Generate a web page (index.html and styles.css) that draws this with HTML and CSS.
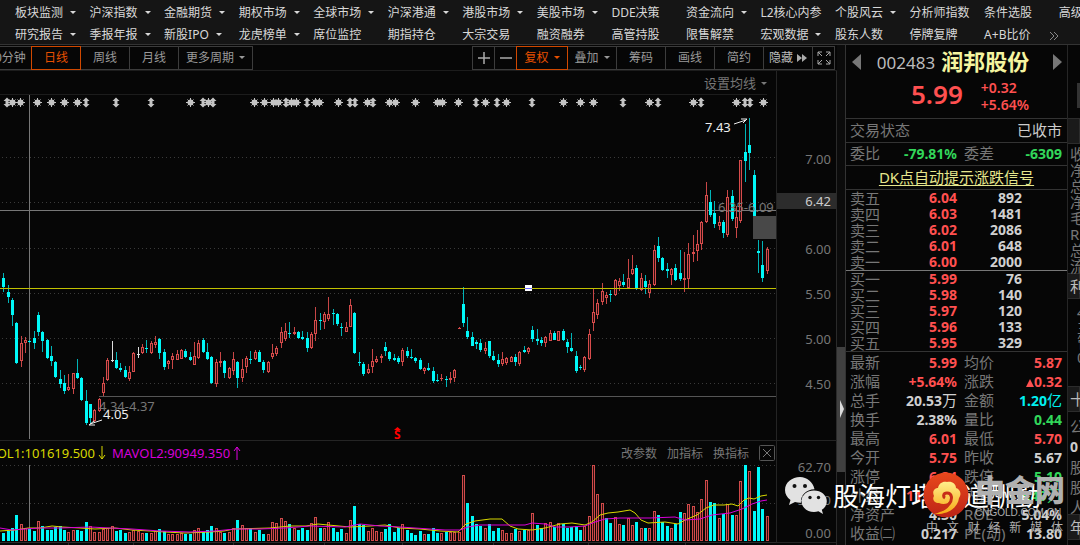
FILE: index.html
```html
<!DOCTYPE html>
<html lang="zh-CN">
<head>
    <meta charset="UTF-8">
    <title>润邦股份 002483</title>
    <link rel="stylesheet" href="styles.css">
</head>
<body>

    <nav class="menu">
        <a href="#" class="drop">板块监测</a>
        <a href="#" class="drop">沪深指数</a>
        <a href="#" class="drop">金融期货</a>
        <a href="#" class="drop">期权市场</a>
        <a href="#" class="drop">全球市场</a>
        <a href="#" class="drop">沪深港通</a>
        <a href="#" class="drop">港股市场</a>
        <a href="#" class="drop">美股市场</a>
        <a href="#">DDE决策</a>
        <a href="#" class="drop">资金流向</a>
        <a href="#">L2核心内参</a>
        <a href="#" class="drop">个股风云</a>
        <a href="#">分析师指数</a>
        <a href="#">条件选股</a>
        <a href="#">高级</a>
        <a href="#" class="drop">研究报告</a>
        <a href="#" class="drop">季报年报</a>
        <a href="#" class="drop">新股IPO</a>
        <a href="#" class="drop">龙虎榜单</a>
        <a href="#">席位监控</a>
        <a href="#">期指持仓</a>
        <a href="#">大宗交易</a>
        <a href="#">融资融券</a>
        <a href="#">高管持股</a>
        <a href="#">限售解禁</a>
        <a href="#" class="drop">宏观数据</a>
        <a href="#">股东人数</a>
        <a href="#">停牌复牌</a>
        <span class="last"><a href="#">A+B比价</a><a href="#" aria-label="更多"><svg width="10" height="10" viewBox="0 0 10 10"><path d="M1 1l4 4-4 4M5 1l4 4-4 4" fill="none" stroke="#888"/></svg></a></span>
    </nav>

    <div class="main">
        <section class="chart">
            <div class="toolbar">
                <div class="group">
                    <button class="minute">30分钟</button>
                    <button class="on">日线</button>
                    <button>周线</button>
                    <button>月线</button>
                    <button class="drop more">更多周期</button>
                </div>
                <div class="group">
                    <button class="icon" aria-label="放大"><svg width="12" height="12" viewBox="0 0 12 12"><path d="M6 0v12M0 6h12" stroke="#aaa" stroke-width="1.5"/></svg></button>
                    <button class="icon" aria-label="缩小"><svg width="12" height="12" viewBox="0 0 12 12"><path d="M0 6h12" stroke="#aaa" stroke-width="1.5"/></svg></button>
                    <button class="drop on">复权</button>
                    <button class="drop">叠加</button>
                    <button>筹码</button>
                    <button>画线</button>
                    <button>简约</button>
                    <button class="hide">隐藏<svg width="10" height="8" viewBox="0 0 10 8"><path d="M0 0l5 4-5 4zM5 0l5 4-5 4z" fill="#aaa"/></svg></button>
                    <button class="icon" aria-label="全屏"><svg width="14" height="14" viewBox="0 0 14 14"><path d="M1 5V1h4M1 1l4 4M9 1h4v4M13 1L9 5M1 9v4h4M1 13l4-4M13 9v4H9M13 13L9 9" fill="none" stroke="#aaa"/></svg></button>
                </div>
            </div>

            <div class="price">
                <div class="plot">
                    <div class="setting"><button class="drop">设置均线</button></div>
                    <svg id="kline" viewBox="0 95 776 345"></svg>
                </div>
                <ul class="axis">
                    <li>7.00</li>
                    <li class="current">6.42</li>
                    <li>6.00</li>
                    <li>5.50</li>
                    <li>5.00</li>
                    <li>4.50</li>
                </ul>
            </div>

            <div class="volume">
                <div class="plot">
                    <div class="vol-head">
                        <span class="ma1"><span>MAVOL1:101619.500</span></span>
                        <svg class="down" width="8" height="14" viewBox="0 0 8 14"><path d="M4 0v13M1 9l3 4 3-4" fill="none" stroke="#d8d800"/></svg>
                        <span class="ma2">MAVOL2:90949.350</span>
                        <svg class="up" width="8" height="14" viewBox="0 0 8 14"><path d="M4 14V1M1 5l3-4 3 4" fill="none" stroke="#e000e0"/></svg>
                        <span class="tools">
                            <button>改参数</button>
                            <button>加指标</button>
                            <button>换指标</button>
                            <button class="close" aria-label="关闭"><svg width="16" height="16" viewBox="0 0 16 16"><rect x=".5" y=".5" width="15" height="15" rx="1" fill="none" stroke="#555"/><path d="M4 4l8 8M12 4l-8 8" stroke="#777"/></svg></button>
                        </span>
                    </div>
                    <svg id="vol" viewBox="0 465 776 80"></svg>
                </div>
                <ul class="axis vol-axis">
                    <li>62.70</li>
                    <li>31.30</li>
                    <li>0.00</li>
                </ul>
            </div>
        </section>

        <div class="splitter"><div class="thumb"></div></div>

        <section class="quote">
            <header>
                <div class="name">
                    <button aria-label="上一只"><svg width="9" height="16" viewBox="0 0 9 16"><path d="M9 0v16L0 8z" fill="#777"/></svg></button>
                    <h1><span class="code">002483</span>润邦股份</h1>
                    <button aria-label="下一只"><svg width="9" height="16" viewBox="0 0 9 16"><path d="M0 0v16l9-8z" fill="#777"/></svg></button>
                </div>
                <div class="now red">
                    <b>5.99</b>
                    <p>+0.32<br>+5.64%</p>
                </div>
            </header>
            <div class="state"><span>交易状态</span><span class="closed">已收市</span></div>
            <table class="detail ratio">
                <tr><th>委比</th><td class="green">-79.81%</td><th>委差</th><td class="green">-6309</td></tr>
            </table>
            <div class="dk"><a href="#">DK点自动提示涨跌信号</a></div>
            <table class="level">
                <tr><th>卖五</th><td class="red">6.04</td><td>892</td></tr>
                <tr><th>卖四</th><td class="red">6.03</td><td>1481</td></tr>
                <tr><th>卖三</th><td class="red">6.02</td><td>2086</td></tr>
                <tr><th>卖二</th><td class="red">6.01</td><td>648</td></tr>
                <tr><th>卖一</th><td class="red">6.00</td><td>2000</td></tr>
            </table>
            <table class="level buy">
                <tr><th>买一</th><td class="red">5.99</td><td>76</td></tr>
                <tr><th>买二</th><td class="red">5.98</td><td>140</td></tr>
                <tr><th>买三</th><td class="red">5.97</td><td>120</td></tr>
                <tr><th>买四</th><td class="red">5.96</td><td>133</td></tr>
                <tr><th>买五</th><td class="red">5.95</td><td>329</td></tr>
            </table>
            <table class="detail">
                <tr><th>最新</th><td class="red">5.99</td><th>均价</th><td class="red">5.87</td></tr>
                <tr><th>涨幅</th><td class="red">+5.64%</td><th>涨跌</th><td class="red rise">0.32</td></tr>
                <tr><th>总手</th><td>20.53<i>万</i></td><th>金额</th><td class="cyan">1.20<i>亿</i></td></tr>
                <tr><th>换手</th><td>2.38%</td><th>量比</th><td class="green">0.44</td></tr>
                <tr><th>最高</th><td class="red">6.01</td><th>最低</th><td class="red">5.70</td></tr>
                <tr><th>今开</th><td class="red">5.75</td><th>昨收</th><td>5.67</td></tr>
                <tr><th>涨停</th><td class="red">6.24</td><th>跌停</th><td class="green">5.10</td></tr>
                <tr><th>外盘</th><td class="red">11.04<i>万</i></td><th>内盘</th><td class="green">9.49<i>万</i></td></tr>
                <tr><th>净资产</th><td>4.30</td><th>ROE</th><td>5.04%</td></tr>
                <tr><th>收益㈡</th><td>0.217</td><th>PE(动)</th><td>13.80</td></tr>
            </table>
        </section>

        <aside class="side">
            <div class="knob"></div>
            <h2></h2>
            <ul class="finance">
                <li>收</li><li>净</li><li>总</li><li>净</li><li>毛</li><li>R</li><li>总</li><li>流</li>
            </ul>
            <h2>利</h2>
            <ul class="news">
                <li>4</li><li>主</li><li>管</li><li>0</li>
            </ul>
            <h2>十</h2>
            <ul class="holder">
                <li>公</li><li><b>0</b></li><li>股</li><li>股</li><li>人</li>
            </ul>
            <h2>年</h2>
            <b>2</b>
        </aside>
    </div>

    <div class="mark wechat">
        <svg width="42" height="40" viewBox="0 0 42 40">
            <path d="M15 1C7 1 0 6.500 0 14c0 4 2 7.500 5.500 10L4 29l6-3c2 .6 4 .8 6 .7-1-7 5-13.500 13.500-13.500C28 6 22 1 15 1z" fill="#e2e2e2"/>
            <path d="M29 14.500c-7 0-12.500 4.700-12.500 10.700S22 36 29 36c1.500 0 3-.2 4.400-.7L38 38l-1.200-4.200c3-2 5-5 5-8.600 0-6-5.800-10.700-12.800-10.700z" fill="#e2e2e2"/>
            <g fill="#111"><circle cx="9.500" cy="10" r="2"/><circle cx="20" cy="10" r="2"/><circle cx="25" cy="21.500" r="1.700"/><circle cx="33.500" cy="21.500" r="1.700"/></g>
        </svg>
        <span>股海灯塔天道酬勤</span>
    </div>
    <div class="mark cngold">
        <div class="gold-top">
            <svg width="46" height="46" viewBox="0 0 46 46">
                <defs>
                    <linearGradient id="disc" x1="0" y1="0" x2="0" y2="1"><stop offset="0" stop-color="#e8481c"/><stop offset="1" stop-color="#bd2416"/></linearGradient>
                    <linearGradient id="fire" x1="0" y1="0" x2="0" y2="1"><stop offset="0" stop-color="#ffef8c"/><stop offset="1" stop-color="#f7a813"/></linearGradient>
                </defs>
                <circle cx="23" cy="23" r="22.500" fill="url(#disc)"/>
                <path d="M16 31c-5 0-7-4-5-7-2-4 0-8 4-8 1-5 5-7 9-6 5-1 9 2 9 6 4 1 6 6 3 10-1 9-10 17-25 16 9-2 16-7 17-13-3 3-8 4-12 2z" fill="url(#fire)"/>
                <path d="M22 26c-2-1-2-5 2-5 5 0 6 6 2 11-2 3-5 5-8 6" fill="none" stroke="#c72d18" stroke-width="3"/>
            </svg>
            <div class="gold-name"><strong>中金网</strong><small>CNGOLD.COM.CN</small></div>
        </div>
        <div class="gold-sub"><span>中</span><span>文</span><span>财</span><span>经</span><span>新</span><span>媒</span><span>体</span></div>
    </div>

    <script src="chart.js"></script>
</body>
</html>
```

FILE: styles.css
```css
*{
    margin: 0;
    padding: 0;
    box-sizing: border-box;
}

body{
    position: relative;
    height: 100vh;
    overflow: hidden;
    background: #060606;
    color: #777;
    font-family: "Noto Sans", "Noto Sans CJK SC", sans-serif;
    font-size: 12px;
}

ul{
    list-style: none;
}

a{
    color: inherit;
    text-decoration: none;
}

button{
    border: 0;
    background: none;
    color: inherit;
    font: inherit;
    cursor: pointer;
}

i{
    font-style: normal;
    font-weight: normal;
}

svg{
    flex: none;
}

.drop:after{
    content: '';
    display: inline-block;
    margin-left: 5px;
    vertical-align: 3px;
    border: 3px solid transparent;
    border-top-color: currentColor;
    border-bottom: 0;
}

.red{
    color: #ff5050;
}

.green{
    color: #32d75a;
}

.cyan{
    color: #00f0f0;
}

/* 顶部菜单 */
.menu{
    display: grid;
    grid-template-columns: repeat(15, 7%);
    height: 45px;
    padding: 2px 0 0 15px;
    overflow: hidden;
    border-bottom: 1px solid #333;
    background: #151515;
    color: #d8d8d8;
    line-height: 22px;
    white-space: nowrap;
}

.menu .drop:after{
    margin-left: 7px;
}

.last{
    display: flex;
    justify-content: space-between;
}

.last svg{
    vertical-align: middle;
}

.main{
    display: grid;
    grid-template-columns: minmax(0, 1fr) 8px 223px 12px;
    height: 500px;
}

.chart{
    min-width: 0;
}

/* 工具栏 */
.toolbar{
    display: flex;
    justify-content: space-between;
    height: 26px;
    border-bottom: 1px solid #1c1c1c;
    color: #999;
}

.group{
    display: flex;
    height: 24px;
    margin: 1px 3px 0 0;
}

.group:first-child{
    margin-left: -18px;
}

.group button{
    width: 50px;
    margin-right: -1px;
    border: 1px solid #3c3c3c;
    line-height: 20px;
    white-space: nowrap;
}

.group .more{
    width: 75px;
}

.group .icon{
    display: flex;
    align-items: center;
    justify-content: center;
    width: 23px;
}

.group .hide{
    color: #bbb;
}

.hide svg{
    margin-left: 4px;
}

.group .on{
    position: relative;
    border-color: #d04800;
    color: #e85000;
}

.group .drop.on{
    width: 52px;
}

/* K线 */
.price, .volume{
    display: flex;
    border-right: 1px solid #2a2a2a;
}

.price{
    height: 370px;
    border-bottom: 1px solid #242424;
}

.plot{
    flex: 1;
    min-width: 0;
}

.plot > svg{
    display: block;
    width: 100%;
}

.setting{
    display: flex;
    justify-content: flex-end;
    height: 24px;
    margin-right: 9px;
    border-bottom: 1px solid #1c1c1c;
    font-size: 13px;
}

#kline text{
    font-size: 13px;
}

#kline .sell{
    font-size: 12px;
    font-weight: bold;
}

.axis{
    width: 60px;
    padding-top: 66px;
    border-left: 1px solid #242424;
    font-size: 13px;
    line-height: 45px;
    text-align: right;
}

.axis li{
    height: 45px;
    padding-right: 5px;
}

.axis .current{
    height: 16px;
    margin: 11px 0 18px;
    background: #2c2c2c;
    color: #ccc;
    line-height: 16px;
}

/* 成交量 */
.vol-head{
    display: flex;
    align-items: center;
    height: 24px;
    font-size: 13px;
}

.ma1{
    display: flex;
    justify-content: flex-end;
    width: 95px;
    overflow: hidden;
    color: #d8d800;
}

.down{
    margin: 0 6px 0 3px;
}

.ma2{
    color: #d800d8;
}

.up{
    margin-left: 3px;
}

.tools{
    display: flex;
    align-items: center;
    gap: 10px;
    margin-left: auto;
    font-size: 12px;
}

.close{
    height: 16px;
    margin-right: 1px;
}

.vol-axis{
    display: flex;
    flex-direction: column;
    justify-content: space-between;
    height: 102px;
    padding: 17px 0 0;
    border-bottom: 1px solid #242424;
    line-height: 18px;
}

.vol-axis li{
    height: 18px;
}

.splitter{
    padding-top: 302px;
    background: #0b0b0b;
}

.thumb{
    height: 125px;
    padding: 53px 0 0 3px;
    background: #404040;
}

.thumb:after{
    content: '';
    display: block;
    border: 9px solid transparent;
    border-left: 4px solid #ddd;
    border-right: 0;
}

/* 报价 */
.quote{
    border-left: 1px solid #333;
    border-right: 1px solid #262626;
    overflow: hidden;
}

.quote header{
    height: 73px;
}

.name{
    display: flex;
    align-items: center;
    justify-content: space-between;
    height: 34px;
    padding: 0 5px 0 6px;
}

.name button{
    height: 16px;
}

h1{
    color: #f5f5a0;
    font-size: 22px;
    font-weight: bold;
    line-height: 34px;
    white-space: nowrap;
}

.code{
    margin-right: 6px;
    color: #bbb;
    font-size: 17px;
    font-weight: normal;
    vertical-align: 1px;
}

.name h1{
    margin-right: 8px;
}

.now{
    display: flex;
    gap: 18px;
    padding-left: 65px;
}

.now b{
    font-size: 26px;
    font-weight: 600;
    line-height: 30px;
}

.now p{
    font-size: 14px;
    font-weight: 600;
    line-height: 17px;
}

.state{
    display: flex;
    justify-content: space-between;
    height: 24px;
    padding: 0 5px 0 4px;
    border-top: 1px solid #333;
    font-size: 15px;
    line-height: 23px;
}

.closed{
    color: #ccc;
}

table{
    width: 100%;
    border-top: 1px solid #333;
    border-spacing: 0;
    table-layout: fixed;
    color: #d0d0d0;
}

th{
    width: 48px;
    padding-left: 4px;
    color: #777;
    font-size: 15px;
    font-weight: normal;
    text-align: left;
    white-space: nowrap;
}

td{
    font-size: 14px;
    font-weight: bold;
    text-align: right;
}

.detail tr{
    height: 19px;
    line-height: 19px;
}

.detail{
    padding-top: 1px;
}

.detail td{
    width: 63px;
}

.detail th ~ th{
    width: 50px;
    padding-left: 7px;
}

.detail td:last-child{
    width: auto;
    padding-right: 5px;
}

.detail i{
    font-size: 15px;
}

.rise:before{
    content: '';
    display: inline-block;
    border: 4px solid transparent;
    border-top: 0;
    border-bottom: 8px solid #ff5050;
}

.ratio{
    padding: 1px 0 2px;
}

.dk{
    height: 24px;
    border-top: 1px solid #333;
    color: #e6e68c;
    font-size: 15px;
    line-height: 23px;
    text-align: center;
}

.dk a{
    text-decoration: underline;
    text-underline-offset: 2px;
}

.level tr{
    height: 16px;
    line-height: 16px;
}

.level td{
    width: 63px;
}

.level td:last-child{
    width: auto;
    padding-right: 45px;
}

.buy{
    border-top-color: #777;
}

/* 右侧栏 */
.side{
    overflow: hidden;
    color: #777;
    font-size: 15px;
}

.knob{
    height: 25px;
    margin: 38px 0 10px 9px;
    background: #333;
}

.side h2{
    height: 26px;
    padding-left: 2px;
    border: 1px solid #2c2c2c;
    border-left: 0;
    background: #1a1a1a;
    color: #bbb;
    font-size: 15px;
    font-weight: normal;
    line-height: 24px;
}

.side ul{
    padding-left: 2px;
}

.finance{
    height: 129px;
    padding-top: 2px;
    line-height: 16px;
}

.side .news{
    height: 87px;
    padding: 6px 0 0 9px;
    line-height: 15px;
}

.holder{
    height: 102px;
    padding-top: 4px;
    line-height: 20px;
}

.side b{
    color: #ccc;
    font-size: 14px;
}

/* 水印 */
.mark{
    position: absolute;
}

.wechat{
    left: 785px;
    top: 476px;
    display: flex;
    align-items: center;
    gap: 6px;
    color: #fff;
    font-size: 26px;
    line-height: 40px;
    white-space: nowrap;
}

.cngold{
    left: 923px;
    top: 472px;
    width: 144px;
    color: #b0b0b0;
}

.gold-top{
    display: flex;
    gap: 6px;
    height: 47px;
}

.gold-name strong{
    display: block;
    font-size: 30px;
    font-weight: 900;
    line-height: 35px;
    white-space: nowrap;
}

.gold-name small{
    display: block;
    font-family: "Liberation Sans", sans-serif;
    font-size: 10px;
    line-height: 12px;
}

.gold-sub{
    display: flex;
    justify-content: space-between;
    padding: 0 4px 0 3px;
    line-height: 17px;
}
```

FILE: chart.js
```javascript
// 每根: 最高 实体顶 实体底 最低 颜色(c跌 r涨 w平)
var candles = (
    '273 278 287 292 c,285 292 297 303 c,298 300 315 326 c,322 323 363 364 c,336 343 361 367 r,337 340 343 353 r,340 341 342 343 c,331 338 343 349 c,' +
    '312 315 332 336 c,331 332 341 352 c,339 340 358 359 c,346 356 361 366 c,361 362 377 378 c,370 379 384 388 c,375 383 391 394 c,374 387 390 391 r,' +
    '373 373 389 394 r,359 373 378 379 c,377 378 400 401 c,390 401 423 425 c,404 404 418 423 c,409 410 421 422 r,398 399 411 412 r,377 383 393 396 r,' +
    '358 360 380 381 r,341 360 361 362 w,352 360 368 369 c,363 368 370 372 c,366 370 377 378 c,366 372 379 381 r,352 353 372 372 r,347 354 355 358 w,' +
    '344 347 353 354 r,340 348 349 353 c,341 343 353 354 r,336 342 345 348 r,338 339 353 359 c,349 352 367 370 c,360 361 364 369 r,353 356 360 369 r,' +
    '350 354 360 360 r,349 350 359 359 r,349 351 357 358 c,352 357 360 361 c,342 356 365 365 r,340 343 358 359 r,338 340 352 353 c,343 352 359 360 c,' +
    '356 357 383 384 c,359 362 384 387 r,352 361 363 367 r,360 361 373 378 c,367 368 378 379 r,352 359 371 375 r,361 362 378 388 c,359 369 378 382 r,' +
    '356 358 367 373 r,351 359 360 364 c,350 352 359 360 r,350 352 362 362 c,360 362 370 373 c,361 362 372 373 r,344 353 357 359 r,346 348 354 356 r,' +
    '327 332 343 348 r,323 331 339 341 r,322 333 334 338 c,327 332 334 335 r,331 332 338 339 c,331 337 339 340 c,332 338 348 352 c,332 334 348 349 r,' +
    '307 320 334 341 r,313 320 321 330 c,312 314 322 329 r,297 314 319 321 r,309 313 314 325 c,313 314 324 326 c,323 327 328 336 c,322 327 332 332 r,' +
    '299 305 327 327 r,312 313 353 354 c,352 362 363 366 c,362 364 374 376 c,364 369 373 374 r,349 361 367 373 r,356 359 362 363 r,354 356 358 363 r,' +
    '342 347 351 356 c,351 352 359 361 c,354 358 360 361 c,356 358 362 364 c,348 350 362 366 r,347 351 356 358 c,349 357 358 359 c,357 358 361 363 c,' +
    '358 360 369 370 c,367 368 371 374 r,363 368 370 371 c,367 371 381 383 c,374 380 381 382 c,374 378 379 381 r,376 379 380 387 c,372 378 380 383 r,' +
    '369 370 378 382 r,327 328 329 329 r,287 304 323 327 c,317 331 337 339 c,332 337 346 346 c,340 342 344 349 c,339 343 350 352 c,342 348 351 354 r,' +
    '341 341 356 358 c,351 356 360 361 c,354 360 364 367 c,352 359 364 366 r,357 358 363 365 r,356 357 362 362 r,354 357 362 366 c,351 352 364 366 r,' +
    '346 350 352 353 c,347 348 352 354 r,326 330 339 342 c,329 339 341 345 c,337 340 343 346 c,336 337 343 347 r,330 333 341 341 r,331 333 340 340 c,' +
    '331 331 341 341 r,329 331 340 341 c,339 342 347 353 c,333 348 351 352 c,351 356 371 373 c,365 367 368 370 c,356 357 370 372 r,329 334 359 360 r,' +
    '288 312 323 331 r,299 303 315 319 r,283 291 302 305 r,292 295 298 304 r,290 294 295 302 c,279 280 295 296 r,278 281 286 291 r,274 282 285 287 c,' +
    '259 278 288 289 r,255 269 274 275 r,265 268 289 290 c,273 278 290 291 r,275 281 287 294 c,280 284 293 298 r,245 250 285 286 r,237 246 258 262 c,' +
    '257 258 270 271 c,263 269 271 278 c,268 269 275 285 r,264 268 280 281 c,250 273 279 281 c,252 278 280 292 r,243 254 279 288 r,235 252 254 262 r,' +
    '230 244 251 261 r,221 222 244 250 r,182 195 222 223 r,190 202 215 217 c,201 213 224 228 c,216 222 226 230 r,220 222 233 238 c,190 197 235 237 r,' +
    '190 196 219 221 c,206 217 228 238 r,160 160 221 223 r,124 152 161 182 c,118 145 153 170 c,170 175 216 216 c,240 251 253 273 c,241 265 278 282 c,' +
    '247 249 271 274 r'
).split(',');

// 成交量柱高
var volumes = [
    8, 10, 13, 26, 17, 13, 12, 10, 20, 15, 11, 11, 14, 15, 11, 9, 11, 11, 10, 19, 15, 9, 9, 12, 13, 15, 10, 11, 8, 9,
    11, 10, 8, 8, 8, 10, 12, 10, 7, 7, 7, 8, 7, 7, 11, 13, 9, 11, 15, 13, 9, 8, 9, 13, 21, 16, 13, 13, 9, 11,
    7, 7, 19, 18, 23, 20, 17, 13, 11, 13, 11, 18, 24, 13, 13, 19, 13, 9, 12, 8, 21, 35, 17, 16, 10, 13, 10, 9, 12, 17,
    9, 13, 17, 11, 8, 6, 10, 7, 7, 13, 8, 8, 9, 9, 9, 9, 66, 38, 25, 17, 15, 13, 17, 10, 13, 11, 8, 8, 12, 10,
    11, 11, 28, 16, 13, 18, 19, 14, 18, 17, 13, 14, 15, 11, 15, 25, 76, 47, 38, 23, 18, 24, 17, 16, 23, 16, 19, 13, 13, 13,
    30, 26, 19, 15, 13, 17, 29, 28, 37, 35, 29, 42, 61, 39, 38, 23, 27, 37, 26, 26, 60, 76, 70, 30, 74, 32, 25
];

// 与K线颜色不同的量柱
var volColor = {8: 'r', 20: 'r', 62: 'r', 106: 'r', 122: 'r', 139: 'c', 172: 'r'};

var stars = [12, 20, 37, 51, 64, 77, 190, 208, 254, 264, 273, 278, 291, 296, 315, 319, 338, 367, 389, 395, 415, 437, 442, 458, 485, 506, 563, 580, 593, 649, 693, 736, 763],
    arrows = [7, 86, 116, 151, 203, 213, 286, 307, 350, 355, 373, 476, 497, 532, 623, 658, 701, 745, 750];

function x(i){
    return Math.round(3.2 + i * 4.337);
}

function grid(ys){
    return ys.map(function(y){
        return '<path d="M2 ' + (y + .5) + 'H776" stroke="#3a3a3a" stroke-dasharray="1 3" shape-rendering="crispEdges"/>';
    }).join('');
}

function kline(){
    var s = grid([157, 202, 248, 293, 338, 383]);
    stars.forEach(function(p){
        s += '<circle cx="' + (p + .5) + '" cy="102.500" r="3" fill="#c4c4c4"/>';
        s += '<path d="M' + (p + .5) + ' 98v9M' + (p - 4) + ' 102.500h9M' + (p - 2.5) + ' 99.500l6 6M' + (p + 3.5) + ' 99.500l-6 6" stroke="#c4c4c4"/>';
    });
    arrows.forEach(function(p){
        s += '<path d="M' + p + ' 97.500l3.500 3.500h-2v3h2l-3.500 3.500-3.500-3.500h2v-3h-2z" fill="#c4c4c4"/>';
    });
    s += '<g shape-rendering="crispEdges">';
    s += '<path d="M0 210.500H776" stroke="#777"/><path d="M99 396.500H776" stroke="#555"/>';
    s += '<path d="M29.500 95V439" stroke="#777"/>';
    candles.forEach(function(row, i){
        var c = row.split(' '),
            color = {c: '#00f8f8', r: '#d84c4c', w: '#ddd'}[c[4]],
            wick = {c: '#00b4b8', r: '#c84646', w: '#ddd'}[c[4]],
            h = Math.max(c[2] - c[1], 1);
        s += '<rect x="' + x(i) + '" y="' + c[0] + '" width="1" height="' + Math.max(c[3] - c[0], 1) + '" fill="' + wick + '"/>';
        s += '<rect x="' + (x(i) - 1) + '" y="' + c[1] + '" width="3" height="' + h + '" fill="' + color + '"/>';
        if (c[4] === 'r' && h > 2) {
            s += '<rect x="' + x(i) + '" y="' + (+c[1] + 1) + '" width="1" height="' + (h - 2) + '" fill="#2c0e0e"/>';
        }
    });
    s += '<path d="M0 288.500H776" stroke="#c0c000"/>';
    s += '<rect x="753" y="216" width="23" height="23" fill="#484848"/>';
    s += '<rect x="525" y="285" width="7" height="6" fill="#fff"/><path d="M525 288.500h7" stroke="#66f"/></g>';
    s += '<text x="99" y="411" fill="#777">4.34-4.37</text><text x="103" y="419" fill="#eee">4.05</text>';
    s += '<text x="718" y="212" fill="#777">6.35-6.09</text><text x="705" y="132" fill="#eee">7.43</text>';
    s += '<path d="M102 420l-12 4M734 124l12-4M94 421l-5 4 6 0M741 119l6 0-4 4" fill="none" stroke="#eee"/>';
    s += '<text class="sell" x="394" y="439" fill="#f00">S</text><path d="M394 430l3.500-3 3.500 3z" fill="#f00"/>';
    document.getElementById('kline').innerHTML = s;
}

function vol(){
    var s = grid([465, 503]) + '<g shape-rendering="crispEdges">';
    s += '<path d="M29.500 465V530" stroke="#777"/>';
    volumes.forEach(function(h, i){
        var up = (volColor[i] || candles[i].slice(-1)) !== 'c';
        s += '<rect x="' + (x(i) - 1) + '" y="' + (541 - h) + '" width="3" height="' + h + '" fill="' + (up ? '#d04a4a' : '#00f8f8') + '"/>';
        if (up) {
            s += '<rect x="' + x(i) + '" y="' + (542 - h) + '" width="1" height="' + (h - 2) + '" fill="#2c0e0e"/>';
        }
    });
    s += '<path d="M0 542.500H776M68.500 542v3M133.500 542v3M233.500 542v3M324.500 542v3M402.500 542v3M493.500 542v3M588.500 542v3M685.500 542v3" stroke="#2a2a2a"/></g>';
    s += '<polyline fill="none" stroke="#d8d800" points="0,531 15,530 28,528 40,528 52,526 62,527 80,528 95,529 115,528 132,530 150,531 165,532 185,533 210,532 224,531 234,529 270,528 290,526 306,526 318,524 328,525 350,527 370,526 385,525 400,528 420,529 440,531 458,532 466,524 475,521 490,519 502,519 510,526 518,529 532,530 545,528 560,524 572,523 585,525 592,522 600,515 608,513 618,512 630,510 635,513 641,520 648,523 665,522 678,524 685,520 697,515 706,508 714,505 724,505 732,504 738,506 744,500 749,498 754,499 761,496 767,495"/>';
    s += '<polyline fill="none" stroke="#d800d8" points="0,528 12,530 25,529 40,528 60,528 90,527 110,528 132,529 160,531 190,532 215,531 235,529 260,529 285,528 310,526 345,527 360,524 380,526 400,527 430,529 445,530 460,530 468,527 480,525 500,525 525,525 532,523 545,524 555,527 570,527 585,526 595,522 605,519 620,518 650,518 675,517 685,520 700,519 712,515 730,513 742,509 752,504 761,501 767,500"/>';
    document.getElementById('vol').innerHTML = s;
}

kline();
vol();
```
